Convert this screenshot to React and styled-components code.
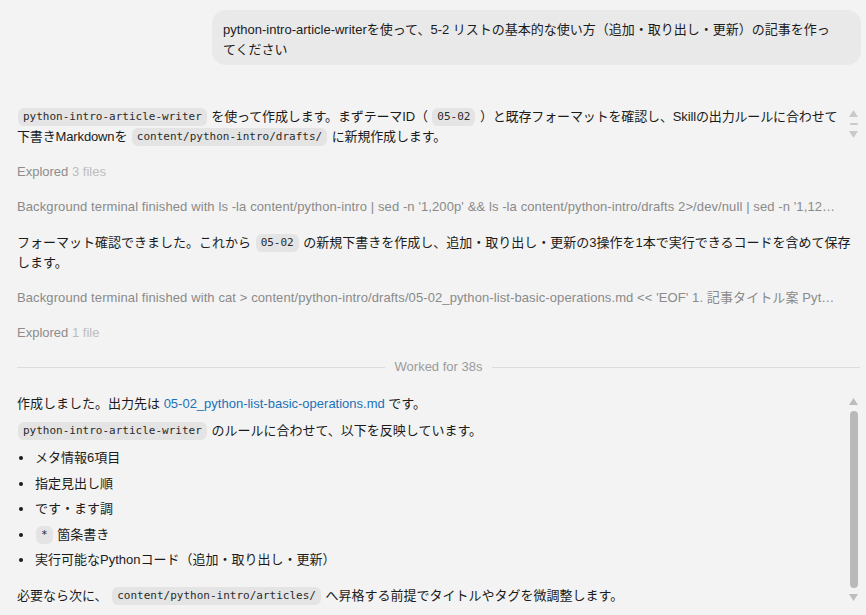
import styled, { createGlobalStyle } from 'styled-components';

const GlobalStyle = createGlobalStyle`
  html, body {
    margin: 0;
    padding: 0;
    background: #f3f3f3;
  }
  body {
    font-family: 'Liberation Sans', 'Noto Sans CJK JP', sans-serif;
    font-size: 13px;
    color: #1b1b1b;
  }
`;

const Page = styled.div`
  display: flex;
  flex-direction: column;
  padding: 10px 6px 0 17px;
  height: 615px;
  box-sizing: border-box;
  overflow: hidden;
`;

const UserBubble = styled.div`
  align-self: flex-end;
  width: 649px;
  box-sizing: border-box;
  background: #e9e9e9;
  border-radius: 14px;
  padding: 10px 12px 5px 11px;
  line-height: 20px;
  margin-right: -1px;
`;

const Thread = styled.div`
  display: flex;
  flex-direction: column;
  gap: 15.2px;
  margin-top: 42px;
  line-height: 20px;
`;

const Para = styled.div`
  position: relative;
  padding-right: ${(p) => (p.$scroll ? '20px' : '0')};
  letter-spacing: ${(p) => (p.$scroll ? '-0.14px' : 'normal')};
`;

const Line = styled.span`
  display: block;
  white-space: nowrap;
`;

const Code = styled.code`
  font-family: 'DejaVu Sans Mono', 'Liberation Mono', monospace;
  font-size: 11px;
  line-height: 14px;
  letter-spacing: 0;
  background: #e4e4e4;
  color: #2b2b2b;
  border-radius: 6px;
  padding: 2px 5px;
  margin: 0 1px;
  display: inline-block;
  vertical-align: 1px;
`;

const Meta = styled.div`
  color: #8d8d8d;
`;

const Faint = styled.span`
  color: #bdbdbd;
`;

const Terminal = styled.div`
  color: #8a8a8a;
  white-space: nowrap;
  overflow: hidden;
  text-overflow: ellipsis;
  letter-spacing: 0.1px;
  margin-right: 21px;
`;

const Divider = styled.div`
  display: flex;
  align-items: center;
  gap: 10px;
  color: #9b9b9b;
  margin-top: -1px;
  &::before,
  &::after {
    content: '';
    flex: 1;
    height: 1px;
    background: #dcdcdc;
  }
`;

const Answer = styled.div`
  position: relative;
  display: flex;
  flex-direction: column;
  margin-top: 2px;
  padding-right: 24px;
`;

const AnswerLine = styled.div`
  margin-top: ${(p) => p.$gap || 0}px;
`;

const Link = styled.a`
  color: #1a72b8;
  text-decoration: none;
`;

const List = styled.ul`
  list-style: none;
  margin: 7px 0 0;
  padding: 0;
  display: flex;
  flex-direction: column;
  gap: 5.5px;
`;

const Item = styled.li`
  display: flex;
  align-items: center;
`;

const Dot = styled.span`
  width: 4px;
  height: 4px;
  border-radius: 50%;
  background: #1b1b1b;
  margin: 0 12px 0 2px;
  flex-shrink: 0;
`;

const ScrollBar = styled.div`
  position: absolute;
  top: ${(p) => p.$top}px;
  bottom: ${(p) => (p.$bottom == null ? 'auto' : `${p.$bottom}px`)};
  right: 2px;
  width: 9px;
  display: flex;
  flex-direction: column;
  align-items: center;
  gap: ${(p) => p.$gap}px;
  svg {
    display: block;
  }
`;

const Thumb = styled.div`
  width: 8px;
  flex: ${(p) => (p.$fill ? 1 : '0 0 auto')};
  height: ${(p) => (p.$fill ? 'auto' : '2px')};
  border-radius: 4px;
  background: ${(p) => p.$color};
`;

const Arrow = ({ down, color }) => (
  <svg width="9" height="7" viewBox="0 0 9 7">
    <path d={down ? 'M0 0 H9 L4.5 7 Z' : 'M4.5 0 L9 7 H0 Z'} fill={color} />
  </svg>
);

const MiniScroll = () => (
  <ScrollBar $top={3} $gap={6}>
    <Arrow color="#c9c9c9" />
    <Thumb $color="#c9c9c9" />
    <Arrow down color="#c9c9c9" />
  </ScrollBar>
);

const MainScroll = () => (
  <ScrollBar $top={4} $bottom={5} $gap={6}>
    <Arrow color="#bdbdbd" />
    <Thumb $fill $color="#b9b9b9" />
    <Arrow down color="#bdbdbd" />
  </ScrollBar>
);

export default function App() {
  return (
    <>
      <GlobalStyle />
      <Page>
        <UserBubble>
          python-intro-article-writerを使って、5-2 リストの基本的な使い方（追加・取り出し・更新）の記事を作っ
          <br />
          てください
        </UserBubble>

        <Thread>
          <Para $scroll>
            <Line>
              <Code>python-intro-article-writer</Code> を使って作成します。まずテーマID（ <Code>05-02</Code> ）と既存フォーマットを確認し、Skillの出力ルールに合わせて
            </Line>
            <Line>
              下書きMarkdownを <Code>content/python-intro/drafts/</Code> に新規作成します。
            </Line>
            <MiniScroll />
          </Para>

          <Meta>
            Explored <Faint>3 files</Faint>
          </Meta>

          <Terminal>
            Background terminal finished with ls -la content/python-intro | sed -n '1,200p' &amp;&amp; ls -la content/python-intro/drafts 2&gt;/dev/null | sed -n '1,120p' &amp;&amp; ls -la content/python-intro/articles
          </Terminal>

          <Para>
            <Line>
              フォーマット確認できました。これから <Code>05-02</Code> の新規下書きを作成し、追加・取り出し・更新の3操作を1本で実行できるコードを含めて保存
            </Line>
            <Line>します。</Line>
          </Para>

          <Terminal>
            Background terminal finished with cat &gt; content/python-intro/drafts/05-02_python-list-basic-operations.md &lt;&lt; 'EOF' 1. 記事タイトル案 Python リストの基本操作
          </Terminal>

          <Meta>
            Explored <Faint>1 file</Faint>
          </Meta>

          <Divider>Worked for 38s</Divider>

          <Answer>
            <AnswerLine>
              作成しました。出力先は <Link>05-02_python-list-basic-operations.md</Link> です。
            </AnswerLine>
            <AnswerLine $gap={7}>
              <Code>python-intro-article-writer</Code> のルールに合わせて、以下を反映しています。
            </AnswerLine>
            <List>
              <Item>
                <Dot />
                メタ情報6項目
              </Item>
              <Item>
                <Dot />
                指定見出し順
              </Item>
              <Item>
                <Dot />
                です・ます調
              </Item>
              <Item>
                <Dot />
                <Code>*</Code>&nbsp;箇条書き
              </Item>
              <Item>
                <Dot />
                実行可能なPythonコード（追加・取り出し・更新）
              </Item>
            </List>
            <AnswerLine $gap={16}>
              必要なら次に、 <Code>content/python-intro/articles/</Code> へ昇格する前提でタイトルやタグを微調整します。
            </AnswerLine>
            <MainScroll />
          </Answer>
        </Thread>
      </Page>
    </>
  );
}
